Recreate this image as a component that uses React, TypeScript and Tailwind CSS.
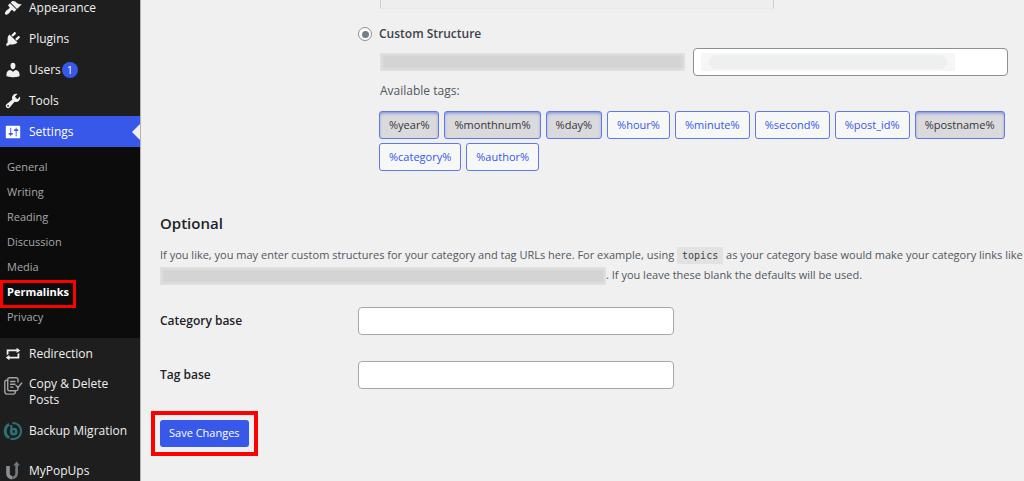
import type { ReactNode } from "react";
import { clsx } from "clsx";

const ICONS = {
  appearance:
    "M14.48 11.06L7.41 3.99l1.5-1.5c.5-.56 2.3-.47 3.51.32 1.21.8 1.43 1.28 2.91 2.1 1.18.64 2.45 1.26 4.45.85zm-.71.71L6.7 4.7 4.93 6.47c-.39.39-.39 1.02 0 1.41l1.06 1.06c.39.39.39 1.03 0 1.42-.6.6-1.43 1.11-2.21 1.69-.35.26-.7.53-1.01.84C1.43 14.23.4 16.08 1.4 17.07c.99 1 2.84-.03 4.18-1.36.31-.31.58-.66.85-1.02.57-.78 1.08-1.61 1.69-2.21.39-.39 1.02-.39 1.41 0l1.06 1.06c.39.39 1.02.39 1.41 0z",
  plugins:
    "M13.11 4.36L9.87 7.6 8 5.73l3.24-3.24c.35-.34 1.05-.2 1.56.32.52.51.66 1.21.31 1.55zm-8 1.77l.91-1.12 9.01 9.01-1.19.84c-.71.71-2.63 1.16-3.82 1.16H6.14L4.9 17.26c-.59.59-1.54.59-2.12 0-.59-.58-.59-1.53 0-2.12l1.24-1.24v-3.88c0-1.13.4-3.19 1.09-3.89zm7.26 3.97l3.24-3.24c.34-.35 1.04-.21 1.55.31.52.51.66 1.21.31 1.55l-3.24 3.25z",
  users:
    "M10 9.25c-2.27 0-2.73-3.44-2.73-3.44C7 4.02 7.82 2 9.97 2c2.16 0 2.98 2.02 2.71 3.81 0 0-.41 3.44-2.68 3.44zm0 2.57L12.72 10c2.39 0 4.52 2.33 4.52 4.53v2.49s-3.65 1.13-7.24 1.13c-3.65 0-7.24-1.13-7.24-1.13v-2.49c0-2.25 1.94-4.48 4.47-4.48z",
  tools:
    "M16.68 9.77c-1.34 1.34-3.3 1.67-4.95.99l-5.41 6.52c-.99.99-2.59.99-3.58 0s-.99-2.59 0-3.57l6.52-5.42c-.68-1.65-.35-3.61.99-4.95 1.28-1.28 3.12-1.62 4.72-1.06l-2.89 2.89 2.82 2.82 2.86-2.87c.53 1.58.18 3.39-1.08 4.65zM3.81 16.21c.4.39 1.04.39 1.43 0 .4-.4.4-1.04 0-1.43-.39-.4-1.03-.4-1.43 0-.39.39-.39 1.03 0 1.43z",
  settings:
    "M18 16V4c0-.55-.45-1-1-1H3c-.55 0-1 .45-1 1v12c0 .55.45 1 1 1h14c.55 0 1-.45 1-1zM8 11h1c.55 0 1 .45 1 1s-.45 1-1 1H8v1.5c0 .28-.22.5-.5.5s-.5-.22-.5-.5V13H6c-.55 0-1-.45-1-1s.45-1 1-1h1V5.5c0-.28.22-.5.5-.5s.5.22.5.5V11zm5-2h-1c-.55 0-1-.45-1-1s.45-1 1-1h1V5.5c0-.28.22-.5.5-.5s.5.22.5.5V7h1c.55 0 1 .45 1 1s-.45 1-1 1h-1v5.5c0 .28-.22.5-.5.5s-.5-.22-.5-.5V9z",
  redirection:
    "M5 7v3l-2 1.5V5h11V3l4 3.01L14 9V7H5zm10 6v-3l2-1.5V15H6v2l-4-3.01L6 11v2h9z",
};

const SUBMENU = ["General", "Writing", "Reading", "Discussion", "Media", "Permalinks", "Privacy"];

const TAGS = [
  { name: "%year%", active: true },
  { name: "%monthnum%", active: true },
  { name: "%day%", active: true },
  { name: "%hour%", active: false },
  { name: "%minute%", active: false },
  { name: "%second%", active: false },
  { name: "%post_id%", active: false },
  { name: "%postname%", active: true },
  { name: "%category%", active: false },
  { name: "%author%", active: false },
];

function DashIcon({ name }: { name: keyof typeof ICONS }) {
  return (
    <svg viewBox="0 0 20 20" fill="currentColor" className="size-[18px]" aria-hidden="true">
      <path d={ICONS[name]} />
    </svg>
  );
}

function CopyDeleteIcon() {
  return (
    <svg
      viewBox="0 0 20 20"
      fill="none"
      stroke="#a0a3a6"
      strokeWidth="1.4"
      strokeLinecap="round"
      strokeLinejoin="round"
      className="size-5"
      aria-hidden="true"
    >
      <path d="M15 6V3.5A1.8 1.8 0 0 0 13.2 1.7H6.5A1.8 1.8 0 0 0 4.7 3.5V13A1.8 1.8 0 0 0 6.5 14.8H13A2 2 0 0 0 15 13V11.5" />
      <path d="M4.7 4.2H3.6A1.8 1.8 0 0 0 1.8 6V15.5A2.6 2.6 0 0 0 4.4 18.1H10.5A1.8 1.8 0 0 0 12.3 16.3V15" />
      <path d="M7.5 5.5H12M7.5 8.3H12M7.5 11.1H10" />
      <path d="M13 9.5L15 11.5L18.8 7" />
    </svg>
  );
}

function BackupIcon() {
  return (
    <svg viewBox="0 0 20 20" fill="none" stroke="#2a7074" className="size-5" aria-hidden="true">
      <path d="M6.2 3.2A7.8 7.8 0 0 0 6.2 16.8" strokeWidth="3" />
      <path d="M9.5 1.9A8.1 8.1 0 1 1 7.5 17.7" strokeWidth="2" />
      <path d="M8.3 4V10.5" strokeWidth="2.2" />
      <circle cx="10.7" cy="10.6" r="2.6" strokeWidth="2.6" />
    </svg>
  );
}

function PopUpsIcon() {
  return (
    <svg viewBox="0 0 20 20" fill="none" stroke="#8d9093" className="size-5" aria-hidden="true">
      <path d="M5 5V12.5A4.3 4.3 0 0 0 9.3 16.8" strokeWidth="3.6" />
      <path d="M9.3 16.8A4.3 4.3 0 0 0 13.6 12.5V4" stroke="#75787b" strokeWidth="2.6" />
      <path d="M10.3 4.5L13.6 .6L16.9 4.5Z" fill="#75787b" stroke="none" />
    </svg>
  );
}

function MenuItem({
  icon,
  label,
  badge,
  current,
  className = "h-[31px] items-center",
}: {
  icon: ReactNode;
  label: string;
  badge?: string;
  current?: boolean;
  className?: string;
}) {
  return (
    <li>
      <a
        href="#"
        className={clsx(
          "relative flex text-xs leading-4 text-[#f0f0f1]",
          current && "bg-[#3858e9] text-white",
          className,
        )}
      >
        <span className="flex w-[29px] shrink-0 items-center justify-center pr-1">{icon}</span>
        <span>{label}</span>
        {badge && (
          <span className="ml-px flex size-4 items-center justify-center rounded-full bg-[#3858e9] text-[10px] text-white">
            {badge}
          </span>
        )}
        {current && (
          <span className="absolute top-1/2 right-0 -translate-y-1/2 border-y-8 border-r-8 border-y-transparent border-r-[#f0f0f1]" />
        )}
      </a>
    </li>
  );
}

function Sidebar() {
  return (
    <nav className="w-[140px] shrink-0 bg-[#1e1e1e]">
      <ul className="-mt-2">
        <MenuItem icon={<DashIcon name="appearance" />} label="Appearance" />
        <MenuItem icon={<DashIcon name="plugins" />} label="Plugins" />
        <MenuItem icon={<DashIcon name="users" />} label="Users" badge="1" />
        <MenuItem icon={<DashIcon name="tools" />} label="Tools" />
        <MenuItem icon={<DashIcon name="settings" />} label="Settings" current />
        <li className="bg-[#0c0c0c] py-2">
          <ul>
            {SUBMENU.map((item) => (
              <li key={item} className="relative">
                <a
                  href="#"
                  className={clsx(
                    "flex h-[25px] items-center pl-[7px] text-[11px]",
                    item === "Permalinks" ? "font-bold text-white" : "text-[#a7a7a8]",
                  )}
                >
                  {item}
                </a>
                {item === "Permalinks" && (
                  <span className="absolute top-0 left-0 h-7 w-[76px] border-[3px] border-[#ff0000]" />
                )}
              </li>
            ))}
          </ul>
        </li>
        <MenuItem icon={<DashIcon name="redirection" />} label="Redirection" />
        <MenuItem icon={<CopyDeleteIcon />} label="Copy & Delete Posts" className="items-start py-[7px]" />
        <MenuItem icon={<BackupIcon />} label="Backup Migration" className="h-8 items-center whitespace-nowrap" />
        <MenuItem icon={<PopUpsIcon />} label="MyPopUps" className="h-12 items-center" />
      </ul>
    </nav>
  );
}

function BaseField({ id, label }: { id: string; label: string }) {
  return (
    <div className="flex items-center">
      <label htmlFor={id} className="w-[198px] shrink-0 text-xs font-semibold text-[#1d2327]">
        {label}
      </label>
      <input
        id={id}
        type="text"
        className="h-7 w-full max-w-[316px] rounded-[4px] border border-[#a5a8ab] bg-white px-2 text-[11px]"
      />
    </div>
  );
}

export default function App() {
  return (
    <div className="flex h-screen overflow-hidden bg-[#f0f0f1] font-['Open_Sans','Noto_Sans',sans-serif] text-[11px] text-[#50575e]">
      <Sidebar />
      <main className="min-w-0 flex-1 border-l border-[#b4b4b5] pl-[19px]">
        <section className="pl-[198px]">
          <div className="ml-[22px] h-[9px] w-[394px] border-x border-b border-x-[#cfcfd0] border-b-[#e9e9ea] bg-[#eeeeef]" />
          <label className="mt-4 flex h-[18px] items-center gap-[7px] text-xs font-semibold text-[#3c434a]">
            <input
              type="radio"
              name="structure"
              defaultChecked
              className="grid size-[14px] appearance-none place-items-center rounded-full border border-[#8c8f94] bg-white before:size-[7px] before:rounded-full before:bg-[#72808c]"
            />
            Custom Structure
          </label>
          <div className="mt-[5px] flex items-center gap-2 pl-[22px]">
            <div className="h-[18px] w-[305px] bg-[#d4d4d5] shadow-[inset_0_0_3px_2px_#e2e2e3]" />
            <div className="flex h-7 w-[315px] items-center rounded-[4px] border border-[#8c8f94] bg-white px-[7px]">
              <div className="h-[18px] w-[254px] bg-[#f6f6f5] px-2 py-0.5">
                <div className="h-full rounded-full bg-[#eeefef]" />
              </div>
            </div>
          </div>
          <p className="mt-[6px] pl-[22px] text-xs leading-[18px]">Available tags:</p>
          <div className="mt-[11px] flex flex-wrap gap-x-[5px] gap-y-1 pl-[21px]">
            {TAGS.map((tag) => (
              <button
                key={tag.name}
                type="button"
                aria-pressed={tag.active}
                className={clsx(
                  "h-7 rounded-[3px] border border-[#5f79ec] px-[9px]",
                  tag.active
                    ? "bg-[#dadadc] text-[#32373c] shadow-[inset_0_2px_4px_-2px_#3858e9]"
                    : "bg-[#f6f7f7] text-[#3858e9]",
                )}
              >
                {tag.name}
              </button>
            ))}
          </div>
        </section>

        <section className="mt-10">
          <h2 className="text-[15px] leading-6 font-semibold text-[#1d2327]">Optional</h2>
          <p className="mt-[10px] leading-[19px] whitespace-nowrap">
            If you like, you may enter custom structures for your category and tag URLs here. For example, using{" "}
            <code className="bg-[#e2e2e3] px-[5px] py-[3px] font-['DejaVu_Sans_Mono',monospace] text-[10px] text-[#3c434a]">
              topics
            </code>{" "}
            as your category base would make your category links like
            <br />
            <span className="inline-block h-[18px] w-[446px] bg-[#d4d4d5] align-middle shadow-[inset_0_0_3px_2px_#e2e2e3]" />
            . If you leave these blank the defaults will be used.
          </p>
        </section>

        <form className="mt-[22px]" onSubmit={(e) => e.preventDefault()}>
          <div className="flex flex-col gap-[26px]">
            <BaseField id="category-base" label="Category base" />
            <BaseField id="tag-base" label="Tag base" />
          </div>
          <div className="mt-[22px] -ml-[9px] w-fit border-4 border-[#ff0000] p-[5px]">
            <button type="submit" className="h-[27px] rounded-[3px] bg-[#3858e9] px-[9px] text-white">
              Save Changes
            </button>
          </div>
        </form>
      </main>
    </div>
  );
}
